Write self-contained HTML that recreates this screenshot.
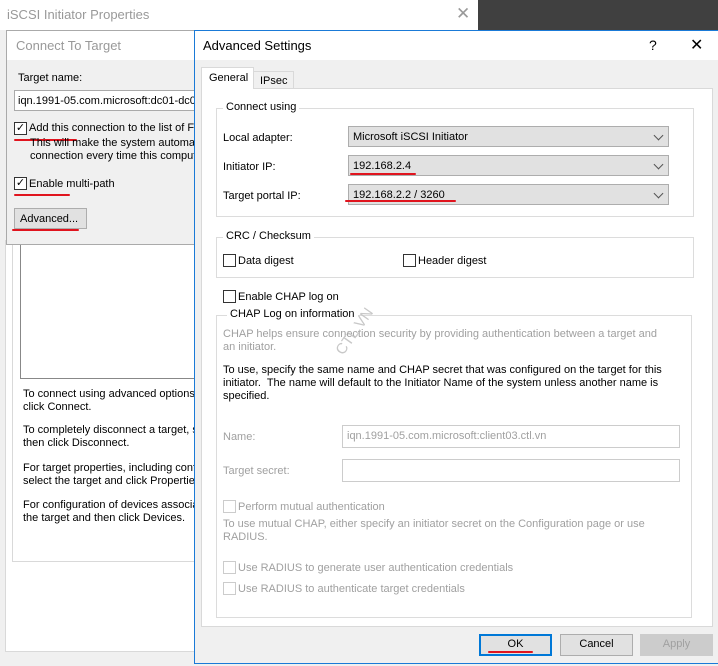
<!DOCTYPE html>
<html><head><meta charset="utf-8"><style>
*{margin:0;padding:0;box-sizing:border-box}
body{width:718px;height:666px;position:relative;overflow:hidden;background:#f0f0f0;font-family:"Liberation Sans",sans-serif;font-size:11px;color:#000}
.a{position:absolute;white-space:nowrap}
.red{position:absolute;height:2px;background:#e0141e;border-radius:1px}
.cb{position:absolute;width:13px;height:13px;border:1px solid #333;background:#fff}
.cb.d{border-color:#ccc}
.combo{position:absolute;left:348px;width:321px;height:21px;background:#e1e1e1;border:1px solid #adadad;padding:4px 0 0 4px}
.chev{position:absolute;right:6px;top:5px;width:7px;height:7px;border-right:1px solid #555;border-bottom:1px solid #555;transform:rotate(45deg)}
.grp{position:absolute;border:1px solid #dcdcdc}
.gl{position:absolute;background:#fff;padding:0 3px;top:-8px}
.g{color:#a0a0a0}
.btn{position:absolute;top:634px;width:73px;height:22px;background:#e1e1e1;border:1px solid #adadad;text-align:center;line-height:19px}
</style></head><body>
<div class="a" style="left:0;top:0;width:478px;height:30px;background:#fff"></div>
<div class="a" style="left:478px;top:0;width:240px;height:30px;background:#404040"></div>
<div class="a" style="left:7px;top:7px;font-size:13px;color:#999">iSCSI Initiator Properties</div>
<div class="a" style="left:456px;top:4px;font-size:17px;color:#999">✕</div>
<div class="a" style="left:5px;top:240px;width:190px;height:412px;background:#fff;border:1px solid #d9d9d9"></div>
<div class="a" style="left:12px;top:240px;width:190px;height:322px;border:1px solid #d9d9d9;border-top:none"></div>
<div class="a" style="left:20px;top:240px;width:180px;height:139px;background:#fff;border:1px solid #888;border-top:none"></div>
<div class="a" style="left:23px;top:388px;line-height:13px">To connect using advanced options,<br>click Connect.</div>
<div class="a" style="left:23px;top:424px;line-height:13px">To completely disconnect a target, s<br>then click Disconnect.</div>
<div class="a" style="left:23px;top:462px;line-height:13px">For target properties, including conf<br>select the target and click Properties</div>
<div class="a" style="left:23px;top:499px;line-height:13px">For configuration of devices associa<br>the target and then click Devices.</div>
<div class="a" style="left:6px;top:30px;width:190px;height:215px;background:#f0f0f0;border:1px solid #aaa"></div>
<div class="a" style="left:7px;top:31px;width:188px;height:29px;background:#fff"></div>
<div class="a" style="left:16px;top:38px;font-size:13px;color:#999">Connect To Target</div>
<div class="a" style="left:18px;top:72px">Target name:</div>
<div class="a" style="left:14px;top:90px;width:182px;height:21px;background:#fff;border:1px solid #aaa;padding:4px 0 0 3px;overflow:hidden">iqn.1991-05.com.microsoft:dc01-dc0</div>
<div class="cb" style="left:14px;top:122px;font-size:11px;line-height:11px;text-align:center">✓</div>
<div class="a" style="left:29px;top:122px">Add this connection to the list of Fa</div>
<div class="red" style="left:14px;top:139px;width:63px"></div>
<div class="a" style="left:30px;top:137px;line-height:13px">This will make the system automati<br>connection every time this comput</div>
<div class="cb" style="left:14px;top:177px;font-size:11px;line-height:11px;text-align:center">✓</div>
<div class="a" style="left:29px;top:178px">Enable multi-path</div>
<div class="red" style="left:14px;top:194px;width:56px"></div>
<div class="a" style="left:14px;top:208px;width:73px;height:21px;background:#e1e1e1;border:1px solid #adadad;padding:4px 0 0 5px">Advanced...</div>
<div class="red" style="left:12px;top:229px;width:67px"></div>
<div class="a" style="left:194px;top:30px;width:524px;height:634px;background:#f0f0f0;border:1px solid #1a7ad7;border-right:none"></div>
<div class="a" style="left:195px;top:31px;width:523px;height:29px;background:#fff"></div>
<div class="a" style="left:203px;top:38px;font-size:13px">Advanced Settings</div>
<div class="a" style="left:649px;top:37px;font-size:14px">?</div>
<div class="a" style="left:690px;top:35px;font-size:16px">✕</div>
<div class="a" style="left:201px;top:88px;width:512px;height:539px;background:#fff;border:1px solid #d9d9d9"></div>
<div class="a" style="left:253px;top:71px;width:41px;height:18px;background:#f0f0f0;border:1px solid #d9d9d9;padding:3px 0 0 6px">IPsec</div>
<div class="a" style="left:201px;top:67px;width:53px;height:22px;background:#fff;border:1px solid #d9d9d9;border-bottom:none;padding:4px 0 0 7px">General</div>

<div class="grp" style="left:216px;top:108px;width:478px;height:109px"><div class="gl" style="left:6px">Connect using</div></div>
<div class="a" style="left:223px;top:132px">Local adapter:</div>
<div class="a" style="left:223px;top:161px">Initiator IP:</div>
<div class="a" style="left:223px;top:190px">Target portal IP:</div>
<div class="combo" style="top:126px">Microsoft iSCSI Initiator<div class="chev"></div></div>
<div class="combo" style="top:155px">192.168.2.4<div class="chev"></div></div>
<div class="combo" style="top:184px">192.168.2.2 / 3260<div class="chev"></div></div>
<div class="red" style="left:350px;top:173px;width:66px"></div>
<div class="red" style="left:345px;top:200px;width:111px"></div>

<div class="grp" style="left:216px;top:237px;width:478px;height:41px"><div class="gl" style="left:6px">CRC / Checksum</div></div>
<div class="cb" style="left:223px;top:254px"></div><div class="a" style="left:238px;top:255px">Data digest</div>
<div class="cb" style="left:403px;top:254px"></div><div class="a" style="left:418px;top:255px">Header digest</div>
<div class="cb" style="left:223px;top:290px"></div><div class="a" style="left:238px;top:291px">Enable CHAP log on</div>

<div class="grp" style="left:216px;top:315px;width:476px;height:303px"><div class="gl" style="left:10px">CHAP Log on information</div></div>
<div class="a g" style="left:223px;top:328px;line-height:13px">CHAP helps ensure connection security by providing authentication between a target and<br>an initiator.</div>
<div class="a" style="left:223px;top:364px;line-height:13px">To use, specify the same name and CHAP secret that was configured on the target for this<br>initiator.&nbsp; The name will default to the Initiator Name of the system unless another name is<br>specified.</div>
<div class="a g" style="left:223px;top:431px">Name:</div>
<div class="a g" style="left:342px;top:425px;width:338px;height:23px;border:1px solid #ccc;background:#fff;padding:4px 0 0 4px">iqn.1991-05.com.microsoft:client03.ctl.vn</div>
<div class="a g" style="left:223px;top:465px">Target secret:</div>
<div class="a" style="left:342px;top:459px;width:338px;height:23px;border:1px solid #ccc;background:#fff"></div>
<div class="cb d" style="left:223px;top:500px"></div><div class="a g" style="left:238px;top:501px">Perform mutual authentication</div>
<div class="a g" style="left:223px;top:518px;line-height:13px">To use mutual CHAP, either specify an initiator secret on the Configuration page or use<br>RADIUS.</div>
<div class="cb d" style="left:223px;top:561px"></div><div class="a g" style="left:238px;top:562px">Use RADIUS to generate user authentication credentials</div>
<div class="cb d" style="left:223px;top:582px"></div><div class="a g" style="left:238px;top:583px">Use RADIUS to authenticate target credentials</div>
<div class="a" style="left:328px;top:323px;font-size:15px;color:#c8c8c8;transform:rotate(-55deg)">CTL.VN</div>

<div class="btn" style="left:479px;border:2px solid #0078d7;line-height:17px">OK</div>
<div class="red" style="left:488px;top:651px;width:45px"></div>
<div class="btn" style="left:560px">Cancel</div>
<div class="btn" style="left:640px;background:#ccc;border-color:#ccc;color:#a0a0a0">Apply</div>
</body></html>
